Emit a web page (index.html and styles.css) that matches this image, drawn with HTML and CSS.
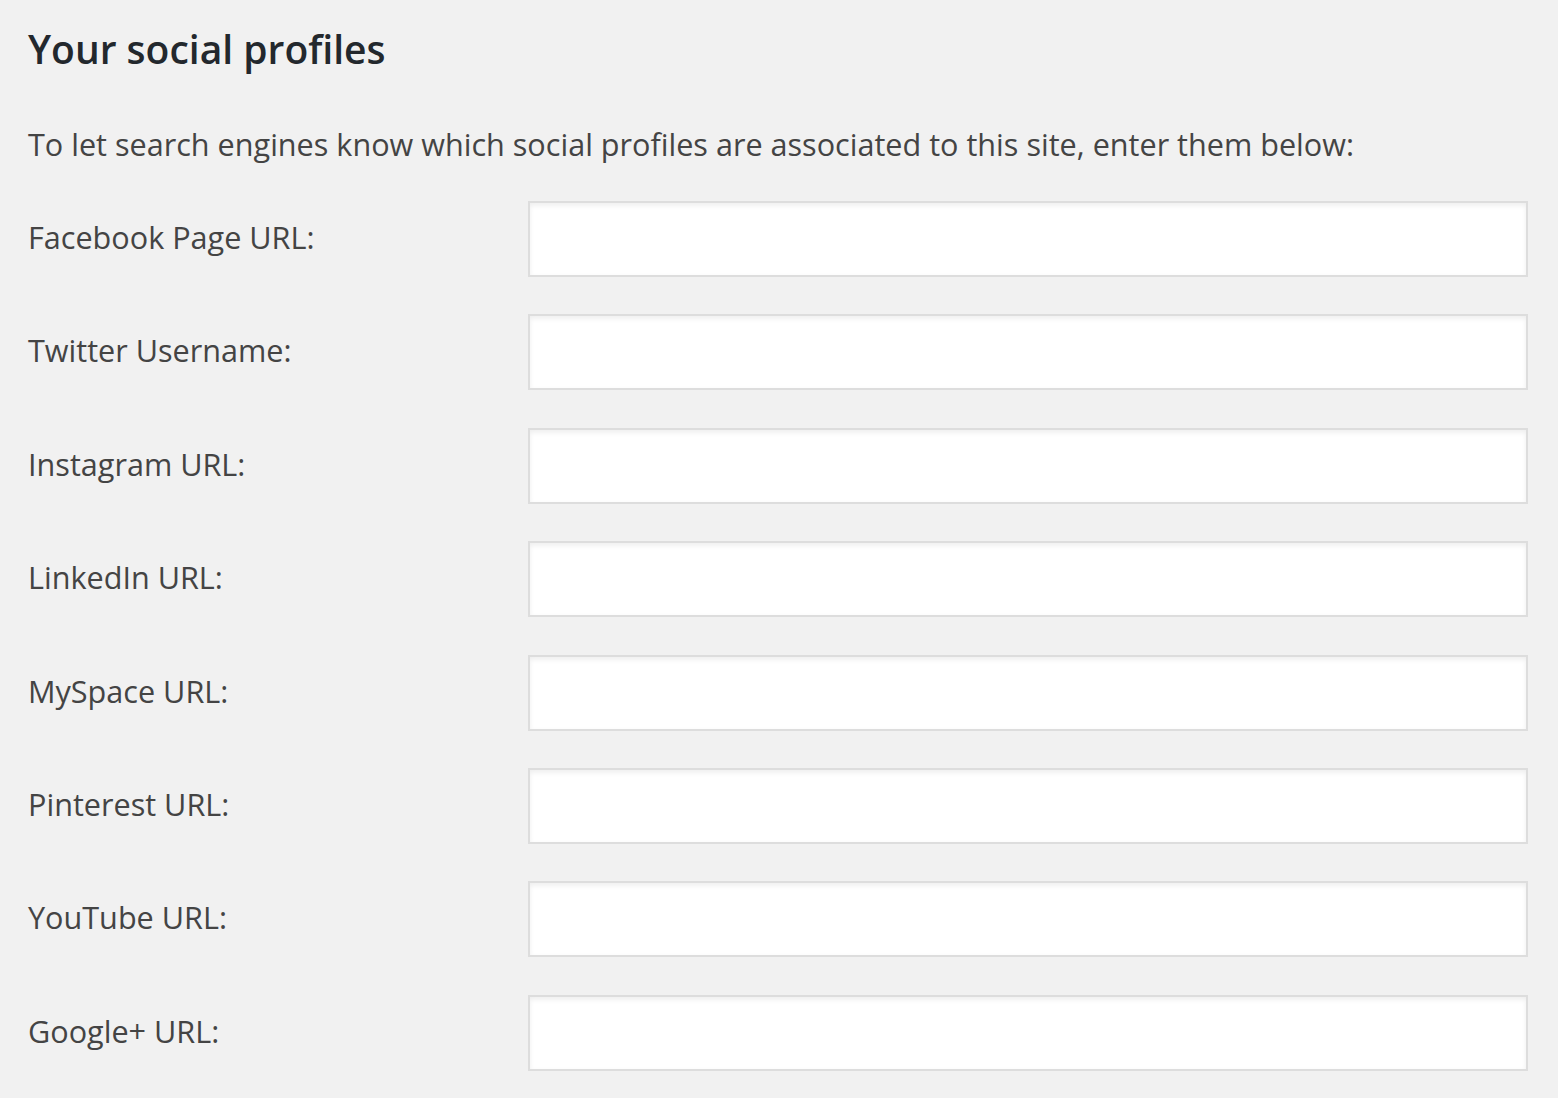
FILE: index.html
```html
<!DOCTYPE html>
<html lang="en">
<head>
<meta charset="utf-8">
<title>Your social profiles</title>
<link rel="stylesheet" href="styles.css">
</head>
<body>
<main class="page">
  <h2 class="title">Your social profiles</h2>
  <p class="intro">To let search engines know which social profiles are associated to this site, enter them below:</p>
  <div class="form">
    <div class="row"><label class="label" for="f1">Facebook Page URL:</label><input class="field" id="f1" type="text"></div>
    <div class="row"><label class="label" for="f2">Twitter Username:</label><input class="field" id="f2" type="text"></div>
    <div class="row"><label class="label" for="f3">Instagram URL:</label><input class="field" id="f3" type="text"></div>
    <div class="row"><label class="label" for="f4">LinkedIn URL:</label><input class="field" id="f4" type="text"></div>
    <div class="row"><label class="label" for="f5">MySpace URL:</label><input class="field" id="f5" type="text"></div>
    <div class="row"><label class="label" for="f6">Pinterest URL:</label><input class="field" id="f6" type="text"></div>
    <div class="row"><label class="label" for="f7">YouTube URL:</label><input class="field" id="f7" type="text"></div>
    <div class="row"><label class="label" for="f8">Google+ URL:</label><input class="field" id="f8" type="text"></div>
  </div>
</main>
</body>
</html>
```
FILE: styles.css
```css
html, body {
  margin: 0;
  padding: 0;
  background: #f1f1f1;
}
body {
  font-family: "Open Sans", "Noto Sans", "Liberation Sans", sans-serif;
  color: #444;
  width: 1558px;
  height: 1098px;
  overflow: hidden;
}
.page {
  padding: 24px 0 0 28px;
}
.title {
  margin: 0;
  font-size: 39px;
  line-height: 50px;
  font-weight: 600;
  color: #23282d;
}
.intro {
  margin: 47px 0 0 0;
  font-size: 30.6px;
  line-height: 46px;
}
.form {
  margin-top: 34px;
  display: flex;
  flex-direction: column;
  gap: 37.4px;
}
.row {
  display: grid;
  grid-template-columns: 500px 1000px;
  align-items: center;
  height: 76px;
}
.label {
  font-size: 30.6px;
  line-height: 46px;
  color: #444;
  padding-bottom: 4px;
}
.field {
  box-sizing: border-box;
  width: 1000px;
  height: 76px;
  margin: 0;
  background: #fff;
  border: 2.5px solid #ddd;
  box-shadow: inset 0 2.5px 5px rgba(0,0,0,0.07);
  border-radius: 0;
  outline: none;
  font: inherit;
}
```
